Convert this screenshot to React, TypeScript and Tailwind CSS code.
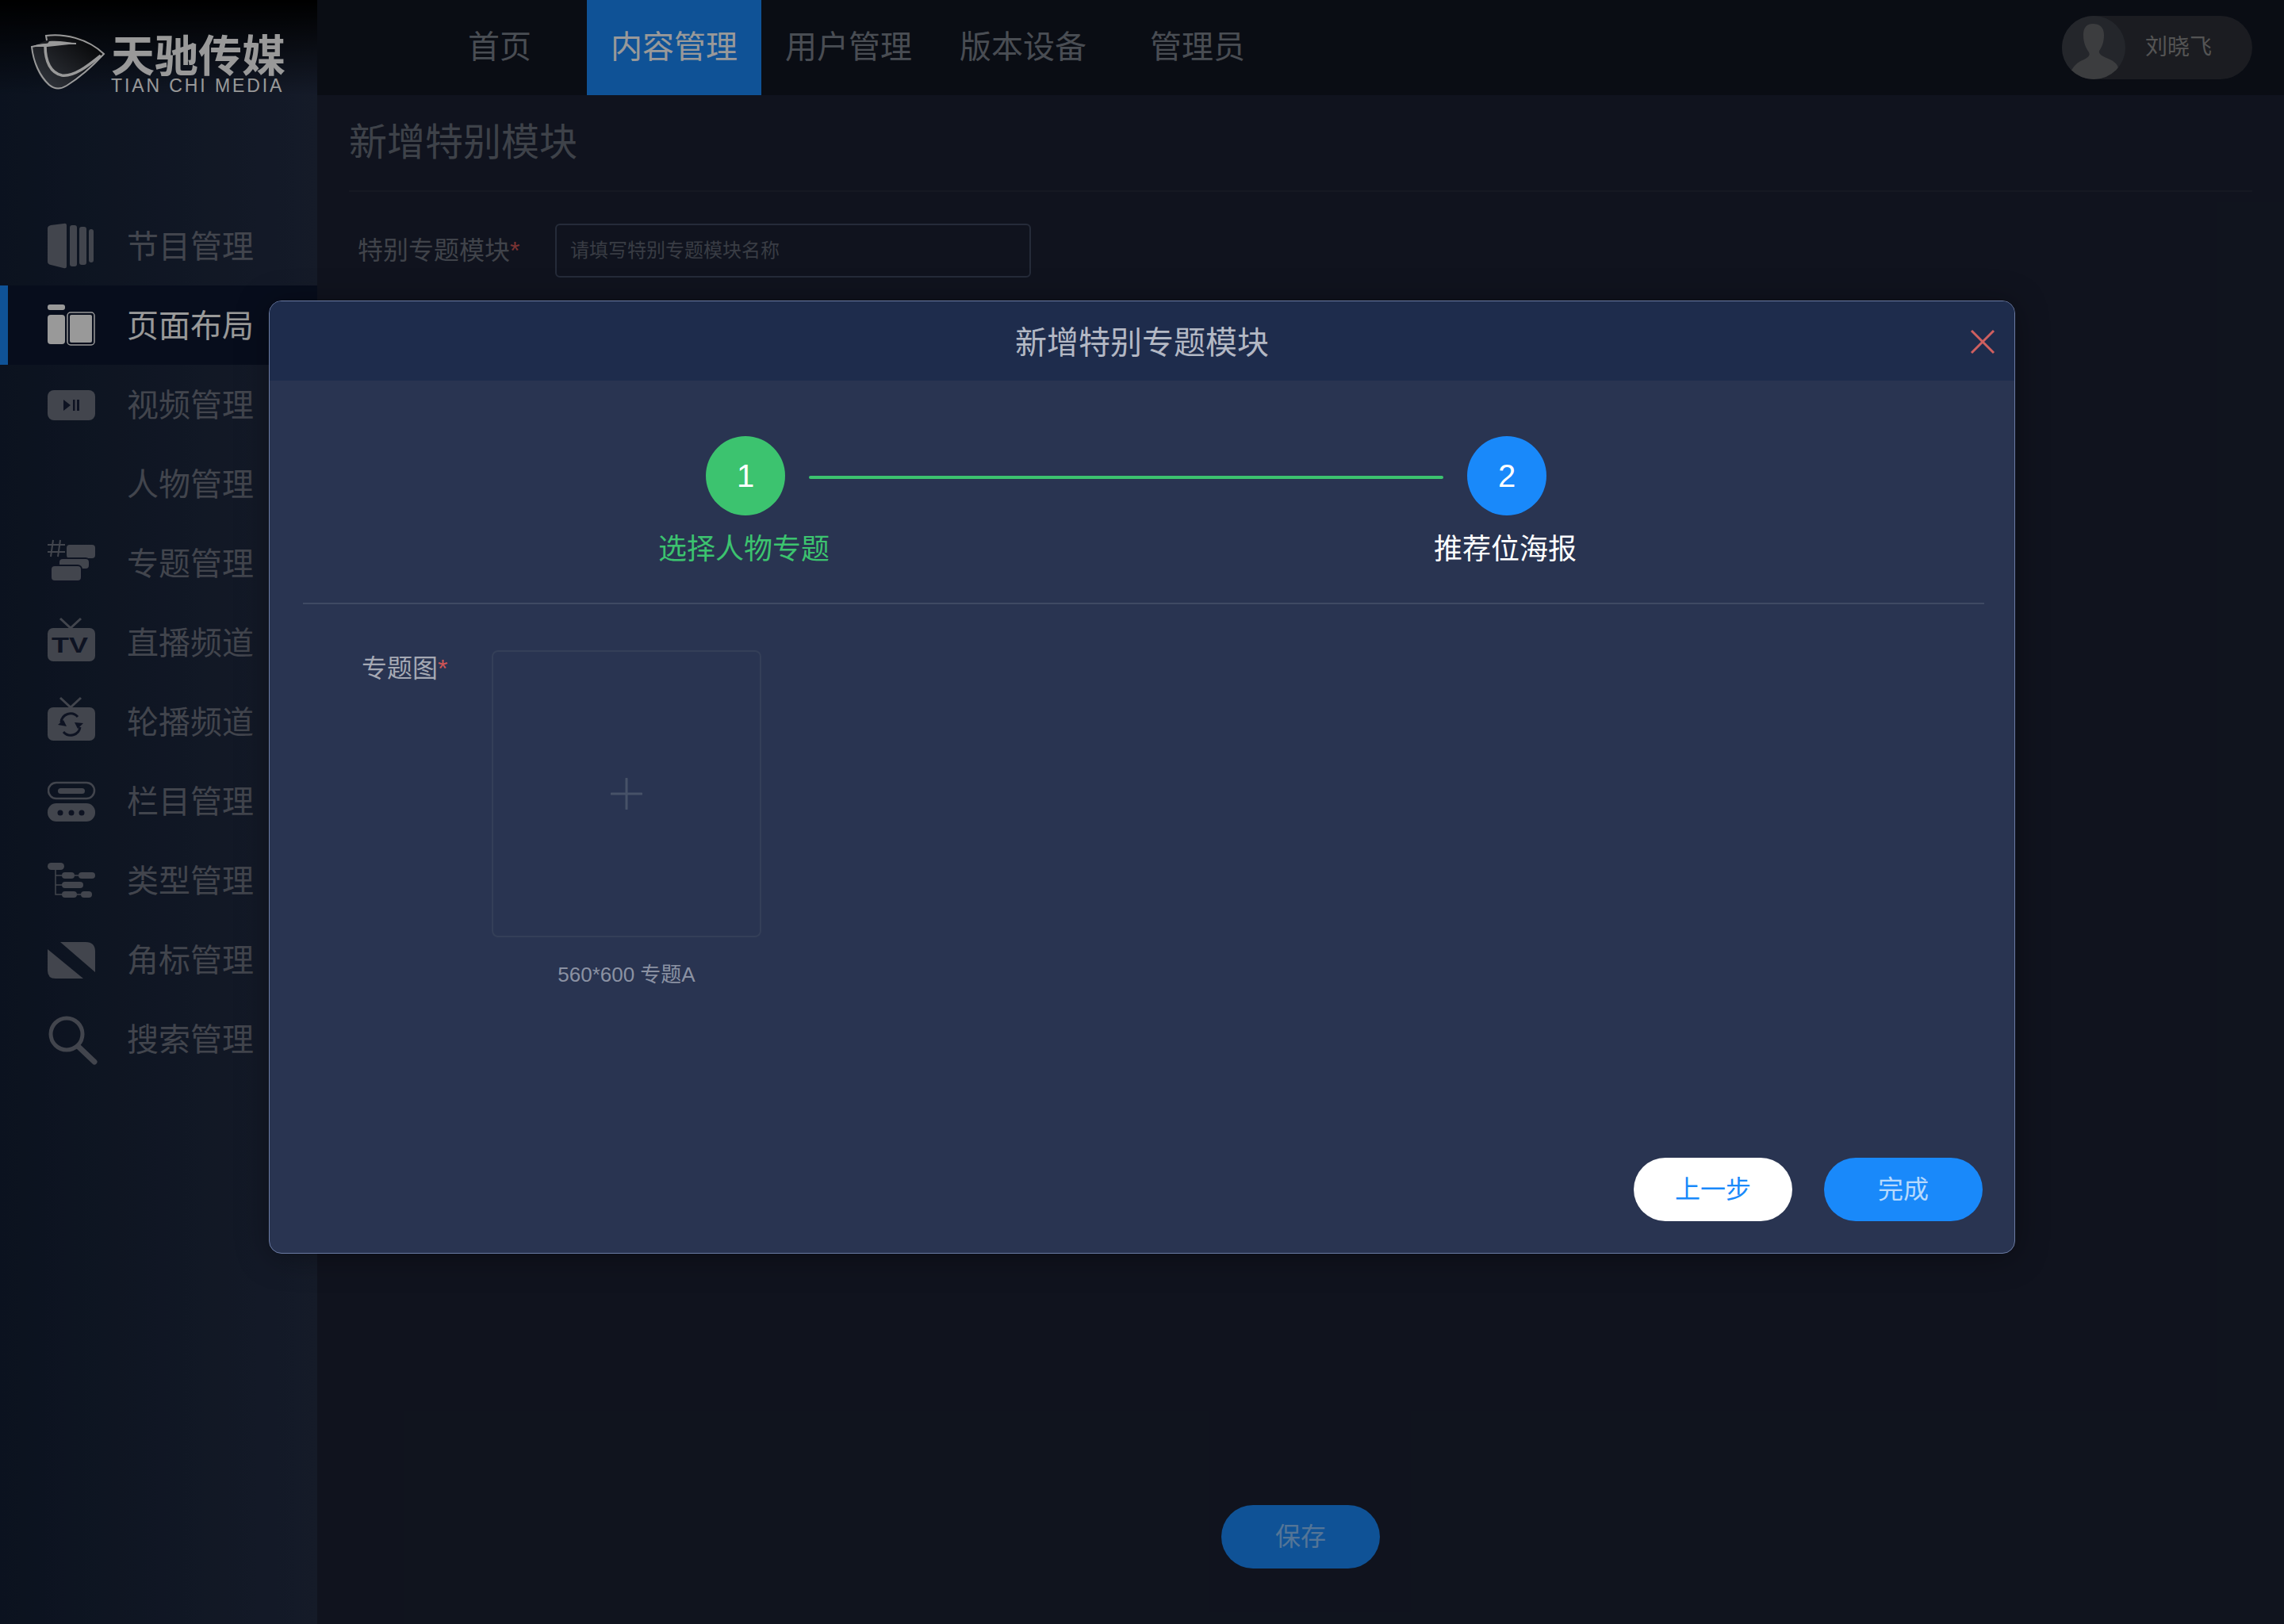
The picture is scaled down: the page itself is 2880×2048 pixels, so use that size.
import React from 'react';

const CUT = '#18213a';

// Sidebar icons share a 64x80 box, drawn in px from the row's top-left + (60, 10)
function FilmIcon() {
  return (
    <g>
      <path d="M4 14 L20 12 Q24 11 24 14 L24 66 Q24 69 20 68 L4 64 Q0 63 0 60 L0 18 Q0 15 4 14Z" />
      <rect x="28" y="14" width="9" height="52" rx="3" />
      <rect x="40" y="16" width="9" height="48" rx="3" />
      <rect x="52" y="19" width="6" height="42" rx="3" />
    </g>
  );
}

function LayoutIcon() {
  return (
    <g>
      <rect x="0" y="14" width="22" height="7" rx="3" />
      <rect x="0" y="27" width="22" height="37" rx="4" />
      <rect x="25" y="24" width="34" height="41" rx="4" fill="none" stroke="currentColor" strokeWidth="1.5" />
      <rect x="28" y="27" width="28" height="35" rx="2" />
    </g>
  );
}

function VideoIcon() {
  return (
    <g>
      <rect x="0" y="22" width="60" height="38" rx="8" />
      <path d="M20 34 L29 41 L20 48Z" fill={CUT} />
      <rect x="32" y="34" width="2.5" height="14" fill={CUT} />
      <rect x="37" y="34" width="3" height="14" fill={CUT} />
    </g>
  );
}

function TopicIcon() {
  return (
    <g>
      <g stroke="currentColor" strokeWidth="2" fill="none">
        <path d="M7 11 L4 32 M16 11 L13 32 M0 17 L22 17 M0 26 L22 26" />
      </g>
      <rect x="24" y="17" width="36" height="17" rx="4" />
      <rect x="14" y="34" width="39" height="14" rx="5" stroke={CUT} strokeWidth="2" />
      <rect x="4" y="43" width="39" height="20" rx="5" stroke={CUT} strokeWidth="2" />
    </g>
  );
}

function TvBody() {
  return (
    <g>
      <path d="M16 10 L29 22 L42 10" fill="none" stroke="currentColor" strokeWidth="3" />
      <rect x="0" y="22" width="60" height="42" rx="7" />
    </g>
  );
}

function LiveIcon() {
  return (
    <g>
      <TvBody />
      <text x="5" y="53" fontSize="28" fontWeight="700" fontFamily="Liberation Sans" fill={CUT} textLength="46" lengthAdjust="spacingAndGlyphs">TV</text>
    </g>
  );
}

function LoopIcon() {
  return (
    <g>
      <TvBody />
      <g fill="none" stroke={CUT} strokeWidth="3">
        <path d="M17 41 A12 12 0 0 1 38 34" />
        <path d="M41 47 A12 12 0 0 1 20 53" />
      </g>
      <path d="M13 44 L20 38 L24 46Z" fill={CUT} />
      <path d="M45 42 L38 49 L34 41Z" fill={CUT} />
    </g>
  );
}

function ColumnIcon() {
  return (
    <g>
      <rect x="1" y="17" width="58" height="20" rx="10" fill="none" stroke="currentColor" strokeWidth="2.5" />
      <rect x="13" y="24" width="34" height="7" rx="3.5" />
      <rect x="0" y="43" width="60" height="23" rx="11" />
      <circle cx="16" cy="55" r="3.5" fill={CUT} />
      <circle cx="30" cy="55" r="3.5" fill={CUT} />
      <circle cx="43" cy="55" r="3.5" fill={CUT} />
    </g>
  );
}

function TypeIcon() {
  return (
    <g>
      <rect x="0" y="18" width="21" height="9" rx="4.5" />
      <path d="M10 26 L10 58 L20 58 M10 34 L20 34 M10 46 L20 46 M34 34 L40 34 M36 58 L44 58" fill="none" stroke="currentColor" strokeWidth="1.5" />
      <rect x="18" y="30" width="16" height="8" rx="4" />
      <rect x="39" y="30" width="21" height="8" rx="4" />
      <rect x="18" y="42" width="27" height="8" rx="4" />
      <rect x="18" y="54" width="19" height="8" rx="4" />
      <rect x="42" y="54" width="14" height="8" rx="4" />
    </g>
  );
}

function CornerIcon() {
  return (
    <g>
      <path d="M16 18 L48 18 Q60 18 60 30 L60 56Z" />
      <path d="M0 27 L45 64 L10 64 Q0 64 0 54Z" />
    </g>
  );
}

function SearchIcon() {
  return (
    <g fill="none" stroke="currentColor">
      <circle cx="24" cy="34" r="20" strokeWidth="5" />
      <path d="M39 50 L59 69" strokeWidth="7" strokeLinecap="round" />
    </g>
  );
}

function Logo() {
  return (
    <div className="flex items-start pl-[30px] pt-[30px] h-[120px] bg-gradient-to-b from-black to-transparent">
      <svg width="104" height="90" viewBox="0 0 104 90" className="shrink-0 text-white">
        <defs>
          <linearGradient id="shield" x1="1" y1="0" x2="0" y2="1">
            <stop offset="0" stopColor="#000000" />
            <stop offset="1" stopColor="#5b6270" />
          </linearGradient>
        </defs>
        <path d="M10 29 C12 52 20 72 36 81 C42 83 50 80 56 75 C72 63 88 50 101 38 C88 24 70 14 56 14 L29 15 L28 21Z" fill="url(#shield)" />
        <path d="M29 21 L28 15 C50 12 80 18 101 38 C88 52 70 68 54 78 C46 83 38 82 32 77 C20 66 12 48 10 29 C30 24 50 24 66 25" fill="none" stroke="currentColor" strokeWidth="2" />
        <path d="M10 29 C16 26 24 25 30 25 L32 22 C44 21 56 23 66 25 L30 29 Z" fill="currentColor" />
        <path d="M27 28 C27 48 34 62 48 65 C64 67 82 52 97 40" fill="none" stroke="currentColor" strokeWidth="3.5" />
      </svg>
      <div className="ml-[6px] pt-[15px] w-[220px] text-white">
        <div className="text-[55px] leading-[52px] font-bold whitespace-nowrap">天驰传媒</div>
        <div className="text-[23px] leading-[20px] mt-[1px] whitespace-nowrap tracking-[2.9px]">TIAN CHI MEDIA</div>
      </div>
    </div>
  );
}

const NAV_ITEMS = [
  { label: '节目管理', icon: <FilmIcon /> },
  { label: '页面布局', icon: <LayoutIcon />, active: true },
  { label: '视频管理', icon: <VideoIcon /> },
  { label: '人物管理', icon: null },
  { label: '专题管理', icon: <TopicIcon /> },
  { label: '直播频道', icon: <LiveIcon /> },
  { label: '轮播频道', icon: <LoopIcon /> },
  { label: '栏目管理', icon: <ColumnIcon /> },
  { label: '类型管理', icon: <TypeIcon /> },
  { label: '角标管理', icon: <CornerIcon /> },
  { label: '搜索管理', icon: <SearchIcon /> },
];

const TOP_TABS = ['首页', '内容管理', '用户管理', '版本设备', '管理员'];

function Sidebar() {
  return (
    <aside className="w-[400px] h-full shrink-0 bg-gradient-to-r from-[#131f34] to-[#232d44]">
      <Logo />
      <div className="h-[140px]" />
      {NAV_ITEMS.map((item) => (
        <div
          key={item.label}
          className={
            item.active
              ? 'flex items-center h-[100px] pl-[50px] border-l-[10px] border-[#1989fa] bg-[#0c162f] text-white'
              : 'flex items-center h-[100px] pl-[60px] text-[#6e7380]'
          }
        >
          <svg width="64" height="80" viewBox="0 0 64 80" fill="currentColor" className="shrink-0">
            {item.icon}
          </svg>
          <span className="ml-[36px] mt-[1px] text-[40px] leading-[56px] whitespace-nowrap">{item.label}</span>
        </div>
      ))}
    </aside>
  );
}

function TopBar() {
  return (
    <header className="flex items-center h-[120px] pl-[120px] pr-[40px] bg-[#111622]">
      {TOP_TABS.map((tab, i) => (
        <div
          key={tab}
          className={
            i === 1
              ? 'flex items-center justify-center w-[220px] h-full pb-[2px] bg-[#1989fa] text-white text-[40px]'
              : 'flex items-center justify-center w-[220px] h-full pb-[2px] text-[#7b808b] text-[40px]'
          }
        >
          {tab}
        </div>
      ))}
      <div className="ml-auto flex items-center w-[240px] h-[80px] rounded-full bg-[#2d3038]">
        <div className="w-[80px] h-[80px] rounded-full overflow-hidden bg-[#3c4049] shrink-0">
          <svg width="80" height="80" viewBox="0 0 80 80" fill="#656669">
            <path d="M27 24 C27 14 32 10 39 10 C47 10 53 14 53 24 C53 34 50 40 47 44 C46 48 50 50 56 53 C64 56 70 60 71 66 L60 80 L20 80 L11 72 C13 64 20 58 28 55 C33 52 36 50 34 46 C30 40 27 34 27 24Z" />
          </svg>
        </div>
        <span className="ml-[25px] text-[28px] text-[#8d8d8d]">刘晓飞</span>
      </div>
    </header>
  );
}

function Page() {
  return (
    <main className="flex-1 flex flex-col h-full bg-[#1b2132]">
      <TopBar />
      <div className="flex-1 flex flex-col px-[40px]">
        <div className="flex items-center h-[122px] border-b-2 border-[#232939] text-[48px] text-[#686e7b]">新增特别模块</div>
        <div className="flex items-center mt-[40px] pl-[11px]">
          <label className="w-[249px] text-[32px] text-[#6b707c]">
            特别专题模块<span className="text-[#cc5555]">*</span>
          </label>
          <div className="flex items-center w-[600px] h-[68px] pl-[17px] rounded-[6px] border-2 border-[#3f4860] text-[24px] text-[#5f6572]">
            请填写特别专题模块名称
          </div>
        </div>
        <div className="flex-1" />
        <div className="flex justify-center pb-[70px]">
          <button className="w-[200px] h-[80px] rounded-full bg-[#1989fa] text-[32px] text-white/50">保存</button>
        </div>
      </div>
    </main>
  );
}

function Step({ n, label, className, labelClass }: { n: number; label: string; className: string; labelClass: string }) {
  return (
    <div className="flex flex-col items-center w-[100px]">
      <div className={`flex items-center justify-center w-[100px] h-[100px] shrink-0 rounded-full text-[40px] text-white ${className}`}>{n}</div>
      <div className={`mt-[18px] mr-[4px] text-[36px] leading-[50px] whitespace-nowrap ${labelClass}`}>{label}</div>
    </div>
  );
}

function Dialog() {
  return (
    <div className="flex flex-col w-[2202px] h-[1202px] rounded-[16px] border border-[#6b7ba3] bg-[#293451] overflow-hidden shadow-[0_4px_40px_rgba(0,0,0,0.35)]">
      <div className="relative flex items-center justify-center h-[100px] pt-[4px] shrink-0 bg-[#1e2c4c] text-[40px] text-[#b3b8c4]">
        新增特别专题模块
        <svg width="32" height="32" viewBox="0 0 32 32" className="absolute right-[24px] top-[35px]" fill="none" stroke="#cf5f5f" strokeWidth="3">
          <path d="M2 2 L30 30 M30 2 L2 30" />
        </svg>
      </div>
      <div className="flex items-start pl-[550px] pt-[70px] h-[280px] shrink-0">
        <Step n={1} label="选择人物专题" className="bg-[#3cc36f]" labelClass="text-[#3cc36f]" />
        <div className="w-[800px] h-[4px] mx-[30px] mt-[50px] rounded-full bg-[#3cc36f]" />
        <Step n={2} label="推荐位海报" className="bg-[#1989fa]" labelClass="text-white" />
      </div>
      <div className="h-[2px] ml-[42px] mr-[38px] shrink-0 bg-[#3f4a63]" />
      <div className="flex items-start pl-[116px] pt-[58px]">
        <label className="w-[164px] mt-[1px] text-[32px] leading-[44px] text-[#a5a9b4]">
          专题图<span className="text-[#cf5555]">*</span>
        </label>
        <div className="flex flex-col items-center w-[340px]">
          <div className="flex items-center justify-center w-[340px] h-[362px] rounded-[8px] border-2 border-[#343f58]">
            <svg width="40" height="40" viewBox="0 0 40 40" stroke="#475268" strokeWidth="3" strokeLinecap="round">
              <path d="M20 1 L20 39 M1 20 L39 20" />
            </svg>
          </div>
          <div className="mt-[29px] text-[26px] leading-[36px] text-[#8b92a3] whitespace-nowrap">560*600 专题A</div>
        </div>
      </div>
      <div className="flex justify-end gap-[40px] mt-auto pr-[40px] pb-[40px]">
        <button className="w-[200px] h-[80px] rounded-full bg-white text-[32px] text-[#1989fa]">上一步</button>
        <button className="w-[200px] h-[80px] rounded-full bg-[#1989fa] text-[32px] text-white/70">完成</button>
      </div>
    </div>
  );
}

export default function App() {
  return (
    <div className="relative flex w-[2880px] h-[2048px] overflow-hidden font-['Liberation_Sans','Noto_Sans_CJK_SC',sans-serif]">
      <Sidebar />
      <Page />
      {/* mask over the page, then the dialog on top */}
      <div className="absolute inset-0 bg-black/40" />
      <div className="absolute left-[339px] top-[379px]">
        <Dialog />
      </div>
    </div>
  );
}
